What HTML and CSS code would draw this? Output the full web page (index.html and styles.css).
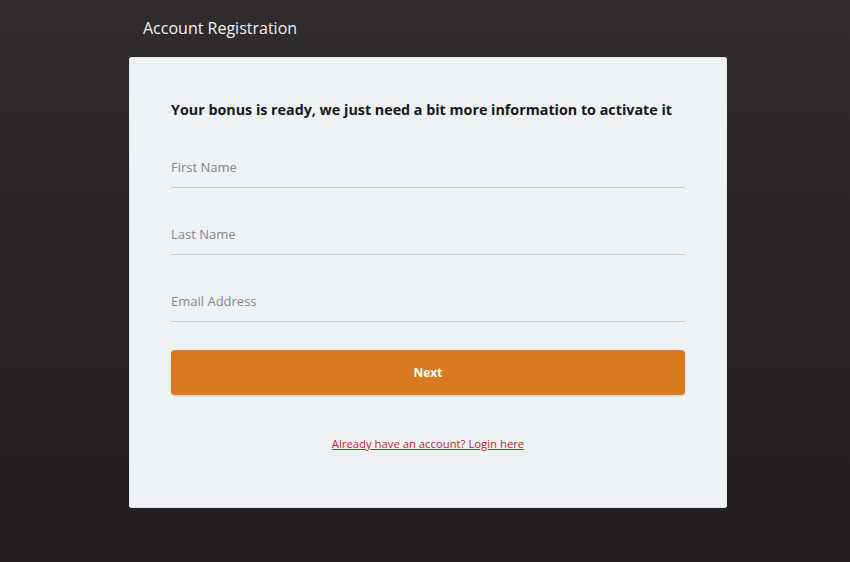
FILE: index.html
```html
<!DOCTYPE html>
<html lang="en">
<head>
    <meta charset="UTF-8">
    <meta name="viewport" content="width=device-width, initial-scale=1.0">
    <title>Account Registration</title>
    <link rel="stylesheet" href="styles.css">
</head>
<body>
    <main class="page">
        <h1 class="page-title">Account Registration</h1>

        <section class="card">
            <h2 class="card-heading">Your bonus is ready, we just need a bit more information to activate it</h2>

            <form class="reg-form" onsubmit="return false">
                <input type="text" class="field" placeholder="First Name">
                <input type="text" class="field" placeholder="Last Name">
                <input type="email" class="field" placeholder="Email Address">
                <button type="submit" class="next-btn">Next</button>
            </form>

            <a href="#" class="login-link">Already have an account? Login here</a>
        </section>
    </main>
</body>
</html>
```

FILE: styles.css
```css
* {
    margin: 0;
    padding: 0;
    box-sizing: border-box;
}

html, body {
    height: 100%;
}

body {
    font-family: 'Open Sans', 'Liberation Sans', sans-serif;
    background: linear-gradient(180deg, #302b2c 0%, #2a2526 40%, #221d1e 100%);
    color: #ffffff;
}

.page {
    width: 598px;
    margin-left: 129px;
    padding-top: 16px;
}

.page-title {
    font-size: 16px;
    font-weight: 400;
    color: #f2f2f2;
    margin-left: 14px;
    line-height: 24px;
    margin-bottom: 17px;
}

.card {
    background-color: #eff2f5;
    border: 1px solid #dfe3e8;
    border-radius: 2px;
    height: 451px;
    padding: 40px 41px 0 41px;
    display: flex;
    flex-direction: column;
}

.card-heading {
    font-size: 14.3px;
    font-weight: 700;
    color: #16181b;
    line-height: 24px;
    margin-bottom: 32px;
}

.reg-form {
    display: flex;
    flex-direction: column;
}

.field {
    font-family: inherit;
    font-size: 13px;
    color: #333;
    background: transparent;
    border: none;
    border-bottom: 1px solid #c5ccd4;
    height: 34px;
    padding: 0 0 8px 0;
    margin-bottom: 33px;
    outline: none;
}

.field::placeholder {
    color: #7d8892;
}

.field:last-of-type {
    margin-bottom: 28px;
}

.next-btn {
    font-family: inherit;
    height: 45px;
    background-color: #d97a22;
    border: none;
    border-radius: 4px;
    color: #ffffff;
    font-size: 12px;
    font-weight: 700;
    cursor: pointer;
    box-shadow: 0 1px 2px rgba(160, 80, 10, 0.25);
}

.login-link {
    align-self: center;
    margin-top: 41px;
    font-size: 11.3px;
    color: #c3262e;
    text-decoration: underline;
}
```
